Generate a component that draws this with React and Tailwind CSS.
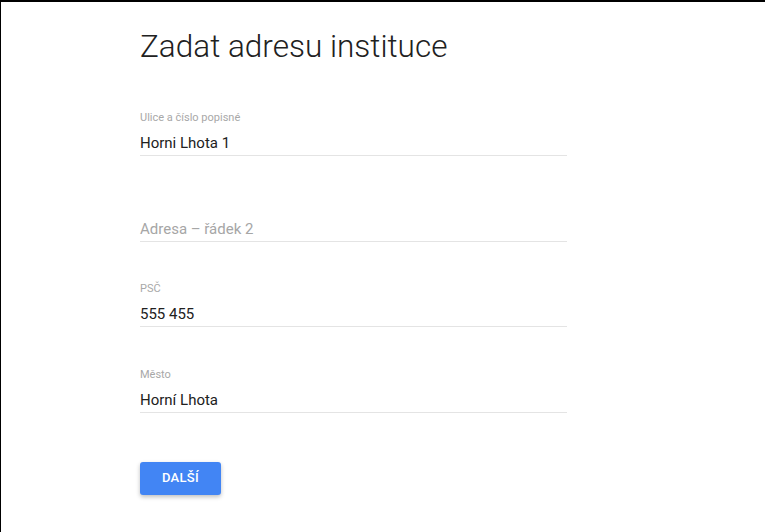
const fields = [
  { label: 'Ulice a číslo popisné', value: 'Horni Lhota 1' },
  { label: '', placeholder: 'Adresa – řádek 2' },
  { label: 'PSČ', value: '555 455' },
  { label: 'Město', value: 'Horní Lhota' },
]

function Field({ label, value, placeholder }) {
  return (
    <div className="w-[427px]">
      <div className="h-[14px] text-[11px] leading-[14px] text-[#a8a8a8]">{label}</div>
      <div className="mt-[8px] border-b border-[#e4e4e4] pb-[2px]">
        {value ? (
          <div className="h-[20px] text-[15px] leading-[20px] text-[#212121]">{value}</div>
        ) : (
          <div className="h-[20px] text-[15px] leading-[20px] text-[#a6a6a6]">{placeholder}</div>
        )}
      </div>
    </div>
  )
}

export default function App() {
  return (
    <div
      className="h-[532px] w-[765px] overflow-hidden border-l border-t-2 border-black bg-white"
      style={{ fontFamily: 'Roboto, "Noto Sans", sans-serif' }}
    >
      <div className="pl-[139px] pt-[26.5px]">
        {/* Header */}
        <h1 className="text-[31.5px] font-light leading-[36px] text-[#212121]">
          Zadat adresu instituce
        </h1>

        {/* Form */}
        <div className="mt-[46.5px] flex flex-col gap-[40.5px]">
          {fields.map((f, i) => (
            <Field key={i} {...f} />
          ))}
        </div>

        {/* Button */}
        <button className="mt-[49px] h-[33px] w-[81px] rounded-[3px] bg-[#4285f4] text-[13px] font-medium tracking-[0.3px] text-white shadow-[0_2px_4px_rgba(0,0,0,0.25)]">
          DALŠÍ
        </button>
      </div>
    </div>
  )
}
